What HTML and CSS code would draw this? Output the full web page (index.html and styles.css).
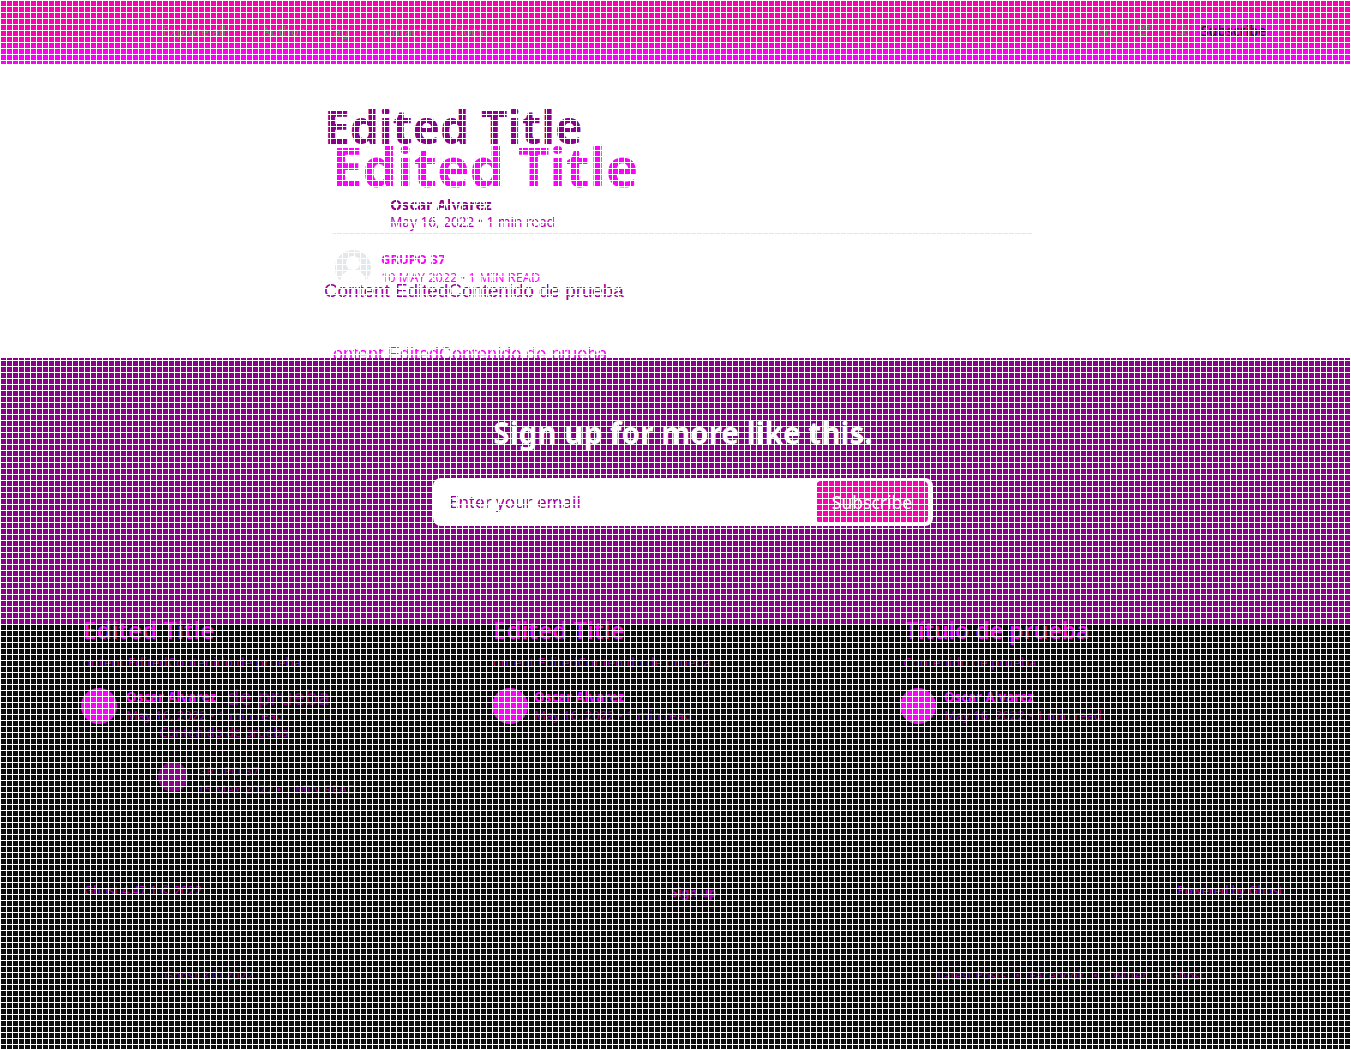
FILE: index.html
```html
<!DOCTYPE html>
<html lang="es">
<head>
<meta charset="utf-8">
<title>Edited Title</title>
<link rel="stylesheet" href="styles.css">
</head>
<body>
<div class="page">
  <header class="topbar">
    <div class="logo-glow"></div>
    <nav class="nav">
      <a>Explore all</a><a>Author</a><a>Tag</a><a>Contacts</a><a>Docs</a>
    </nav>
    <div class="top-actions">
      <svg class="ico" viewBox="0 0 16 16"><circle cx="8" cy="8" r="6.5"/><path d="M9 14V7.500c0-1.500.6-2 2-2M6.500 8.500h4"/></svg>
      <svg class="ico" viewBox="0 0 16 16"><path d="M2 12c5 2.500 11 0 11-6.500l1.500-1.800-2-.2C11 2 8 3 8.200 6 5.500 6 4 5 2.500 3.500 2 5.500 2.800 7 4 8l-1.500-.3c.2 1.500 1.200 2.400 2.500 2.800l-1.400.1c.4.800 1.200 1.200 2 1.300"/></svg>
      <svg class="ico" viewBox="0 0 16 16"><circle cx="7" cy="7" r="5"/><path d="M11 11l4 4"/></svg>
      <a class="subscribe-top">Subscribe</a>
    </div>
  </header>

  <main class="article">
    <h1 class="title-back">Edited Title</h1>
    <h1 class="title-front">Edited Title</h1>
    <div class="byline">
      <strong>Oscar Alvarez</strong>
      <span>May 16, 2022 • 1 min read</span>
    </div>
    <hr class="rule">
    <div class="author">
      <svg class="avatar-ghost" viewBox="0 0 36 36"><circle cx="18" cy="18" r="18" class="av-bg"/><circle cx="18" cy="13" r="7" class="av-fg"/><path d="M5 31c2-8 7-11 13-11s11 3 13 11a18 18 0 0 1-26 0z" class="av-fg"/></svg>
      <div class="author-meta">
        <strong>GRUPO 37</strong>
        <span>10 MAY 2022 • 1 MIN READ</span>
      </div>
    </div>
    <p class="para-back">Content EditedContenido de prueba</p>
    <p class="para-front">Content EditedContenido de prueba</p>
  </main>

  <section class="signup">
    <h2>Sign up for more like this.</h2>
    <form class="signup-form">
      <span class="placeholder">Enter your email</span>
      <button type="button">Subscribe</button>
    </form>
  </section>

  <footer class="dark">
    <div class="cards">
      <article class="card card-a">
        <h3>Edited Title</h3>
        <p class="excerpt clipped">Content EditedContenido de prueba</p>
        <div class="who who-a">
          <span class="dot"></span>
          <div class="who-meta">
            <div class="name-row"><strong>Oscar Alvarez</strong><em>de prueba</em></div>
            <span>May 16, 2022 • 1 min read</span>
          </div>
        </div>
        <p class="excerpt-2">Contenido de prueba</p>
        <div class="who-2">
          <span class="dot-2"></span>
          <div class="who-2-meta">
            <strong>GRUPO 37</strong>
            <span>15 MAY 2022 • 1 MIN READ</span>
          </div>
        </div>
      </article>
      <article class="card card-b">
        <h3>Edited Title</h3>
        <p class="excerpt clipped">Content EditedContenido de prueba</p>
        <div class="who who-b">
          <span class="dot"></span>
          <div class="who-meta">
            <div class="name-row"><strong>Oscar Alvarez</strong></div>
            <span>May 16, 2022 • 1 min read</span>
          </div>
        </div>
      </article>
      <article class="card card-c">
        <h3>Título de prueba</h3>
        <p class="excerpt">Contenido de prueba</p>
        <div class="who who-c">
          <span class="dot"></span>
          <div class="who-meta">
            <div class="name-row"><strong>Oscar Alvarez</strong></div>
            <span>May 16, 2022 • 1 min read</span>
          </div>
        </div>
      </article>
    </div>
    <div class="foot-row">
      <span>Ghost 4.47.1 © 2022</span>
      <strong>Sign up</strong>
      <span>Powered by Ghost</span>
    </div>
    <div class="foot-row-2">
      <span>Ghost 3 © 2022</span>
      <nav class="foot-links">
        <a>Latest Posts</a><span>•</span><a>Facebook</a><span>•</span><a>Twitter</a><span>•</span><a>Ghost</a>
      </nav>
    </div>
  </footer>
  <div class="grid-overlay"></div>
</div>
</body>
</html>
```
FILE: styles.css
```css
* { box-sizing: border-box; }
html, body { margin: 0; padding: 0; }
body { font-family: "Noto Sans", sans-serif; background: #fff; }
.page { position: relative; width: 1351px; height: 1049px; overflow: hidden; display: flex; flex-direction: column; }
.grid-overlay {
  position: absolute; inset: 0; pointer-events: none;
  background-image:
    repeating-linear-gradient(to right, #fff 0, #fff 1px, transparent 1px, transparent 6px),
    repeating-linear-gradient(to bottom, #fff 0, #fff 1px, transparent 1px, transparent 6px);
}
.topbar {
  height: 64px; flex: none; display: flex; align-items: center; padding: 0 69px 3px 85px;
  background: linear-gradient(to bottom, #ff00b0 0, #ff00b0 38px, #ff00ff 54px);
  color: #5c8a5c; font-size: 13px;
}
.logo-glow { width: 78px; height: 22px; background: #ff00cc; border-radius: 4px; }
.nav { display: flex; gap: 23px; margin-right: auto; }
.nav a:first-child { margin-right: 13px; }
.nav a:nth-child(3) { margin-right: 4px; }
.nav a:nth-child(4) { margin-right: 2px; }
.top-actions { display: flex; align-items: center; gap: 23px; }
.ico { width: 15px; height: 15px; fill: none; stroke: #5c8a5c; stroke-width: 1.3; }
.subscribe-top { background: #ff00e6; color: #1d1030; padding: 7px 16px 7px 9px; border-radius: 6px; margin-left: -20px; font-size: 14px; font-weight: 500; }

.article { height: 294px; flex: none; overflow: hidden; background: #fff; }
.title-back { margin: 42px 0 0 324px; font-size: 46px; line-height: 40px; font-weight: 700; color: #8b008b; white-space: nowrap; }
.title-front { margin: -2px 0 0 332px; font-size: 54.500px; line-height: 44px; font-weight: 700; color: #ff00ff; white-space: nowrap; }
.byline { margin: 7px 0 0 390px; display: flex; flex-direction: column; line-height: 18px; }
.byline strong { font-size: 15px; color: #8b008b; }
.byline span { font-size: 13.600px; color: #b000b0; }
.rule { margin: 2px 0 0 333px; width: 699px; height: 1px; border: 0; background: #e5e5e5; }
.author { margin: 16px 0 0 335px; display: flex; gap: 10px; height: 36px; }
.avatar-ghost { width: 36px; height: 36px; flex: none; }
.av-bg { fill: #e3e8ec; }
.av-fg { fill: #fff; }
.author-meta { display: flex; flex-direction: column; line-height: 18px; }
.author-meta strong { font-size: 13px; color: #ff00ff; }
.author-meta span { font-size: 12.700px; color: #ff00ff; }
.para-back { margin: -6px 0 0 324px; font: 18.800px/22px "Liberation Sans", sans-serif; color: #a000a0; white-space: nowrap; }
.para-front { margin: 41px 0 0 333px; width: 500px; overflow: hidden; text-indent: -13px; font: 18px/22px "Liberation Sans", sans-serif; color: #ff00ff; white-space: nowrap; }

.signup { height: 267px; flex: none; background: #8b008b; display: flex; flex-direction: column; align-items: center; padding-left: 15px; color: #fff; }
.signup h2 { margin: 56px 0 0; font-size: 29.700px; line-height: 38px; font-weight: 700; }
.signup-form { margin-top: 26px; width: 500px; height: 48px; background: #fff; border-radius: 8px; display: flex; align-items: center; justify-content: space-between; padding: 3px 5px 3px 16px; }
.placeholder { font-size: 17px; color: #a000a0; margin-bottom: 2px; }
.signup-form button { width: 112px; height: 42px; border: 0; border-radius: 5px; background: #ff00b0; color: #fff; font: 17.500px "Noto Sans", sans-serif; padding: 0; }

.dark { flex: 1; background: #0d0d0d; display: flex; flex-direction: column; color: #ff00ff; font-size: 12px; }
.cards { height: 246px; flex: none; display: flex; }
.card { flex: none; }
.card-a { margin-left: 83px; width: 410px; }
.card-b { width: 412px; }
.card-c { width: 400px; }
.card h3 { margin: -10px 0 0; font-size: 24px; line-height: 30px; font-weight: 600; color: #ff00ff; white-space: nowrap; }
.card-c h3 { font-size: 23px; }
.excerpt { margin: 8px 0 0; font-size: 13.400px; line-height: 18px; color: #b000b0; white-space: nowrap; width: 240px; overflow: hidden; }
.card-c .excerpt { margin-left: -2px; }
.clipped { text-indent: -9px; }
.who { display: flex; margin-top: 17px; height: 36px; }
.who-a { margin-left: -2px; gap: 9px; }
.who-b { margin-left: -1px; gap: 6px; }
.who-c { margin-left: -5px; gap: 8px; }
.dot { width: 36px; height: 36px; border-radius: 50%; background: #ff00ff; flex: none; }
.who-meta { display: flex; flex-direction: column; line-height: 18px; }
.who-meta > span { font-size: 13px; color: #a000a0; }
.name-row { display: flex; gap: 10px; align-items: center; height: 18px; }
.name-row strong { font-size: 13.300px; color: #ff00ff; }
.name-row em { font-style: normal; font-size: 21.500px; color: #8b008b; }
.excerpt-2 { margin: -1px 0 0 76px; font-size: 13px; line-height: 18px; color: #8b008b; }
.who-2 { display: flex; gap: 9px; margin: 21px 0 0 75px; height: 30px; }
.dot-2 { width: 30px; height: 30px; border-radius: 50%; background: #8b008b; flex: none; }
.who-2-meta { display: flex; flex-direction: column; line-height: 18px; color: #8b008b; font-size: 12.700px; }
.who-2-meta strong { font-weight: 400; }
.foot-row { margin-top: 11px; padding: 0 68px 0 84px; display: flex; justify-content: space-between; line-height: 18px; color: #c000c0; font-size: 12.400px; }
.foot-row strong { color: #c000c0; margin: 2px 0 0 8px; font-size: 12.400px; }
.foot-row-2 { margin-top: 65px; padding: 0 147px 0 164px; display: flex; justify-content: space-between; line-height: 18px; color: #8b008b; font-size: 12.300px; }
.foot-links { display: flex; gap: 9px; }
```
